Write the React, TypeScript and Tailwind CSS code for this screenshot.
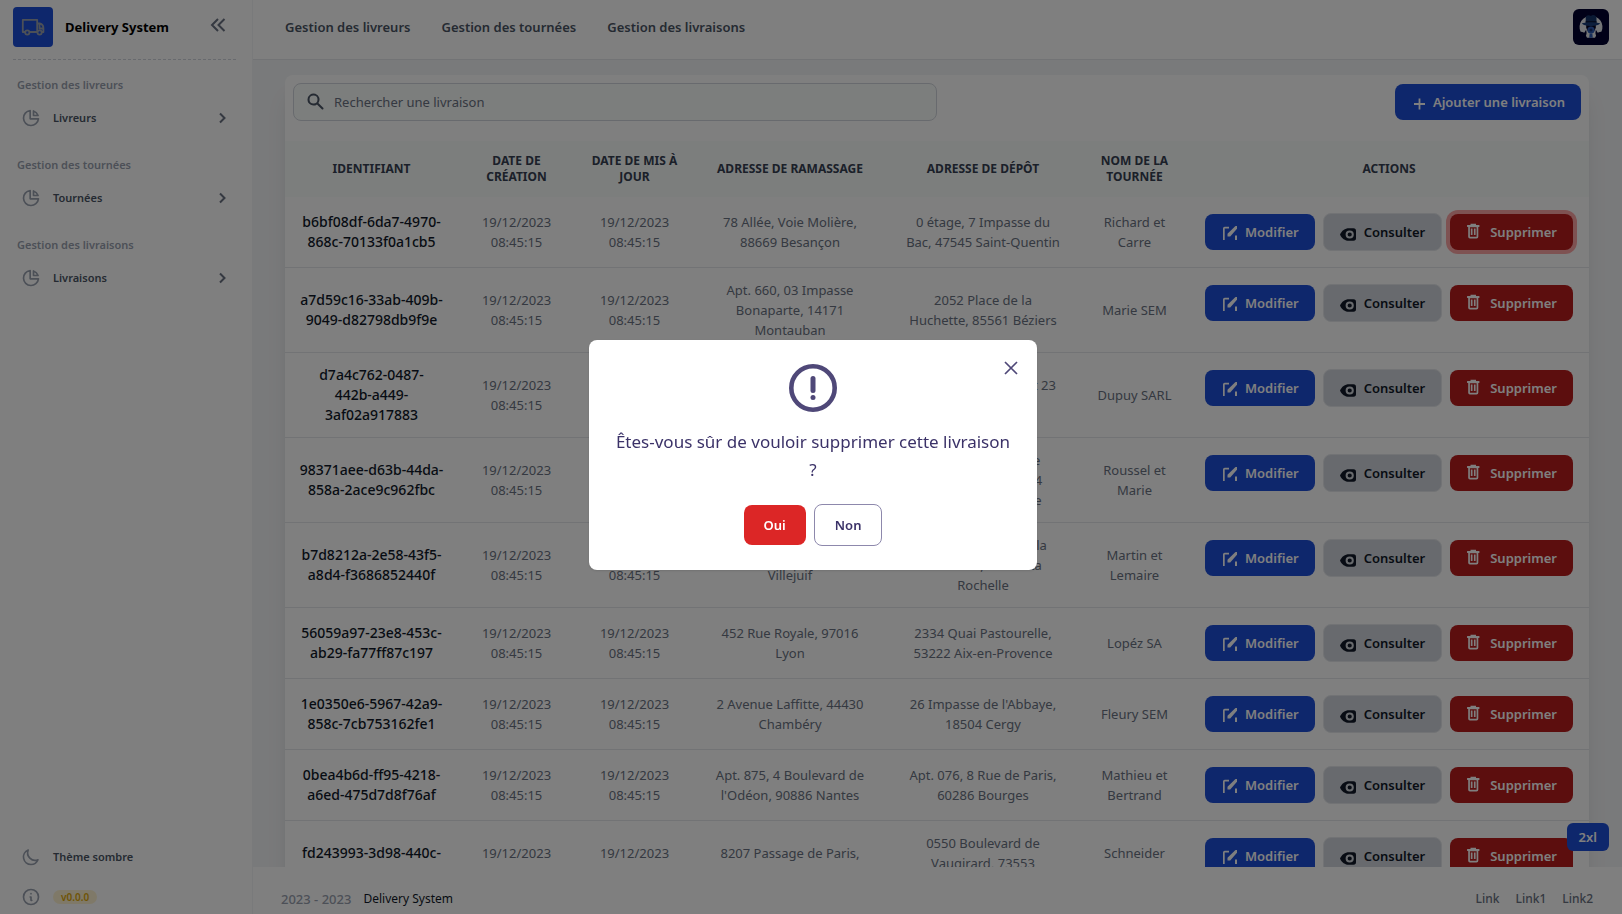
import React from 'react';
import { HiOutlineChartPie, HiOutlineInformationCircle, HiOutlineMoon } from 'react-icons/hi';

type Delivery = { id: string; from: string; to: string; tour: string };

const deliveries: Delivery[] = [
  { id: 'b6bf08df-6da7-4970-\n868c-70133f0a1cb5', from: '78 Allée, Voie Molière,\n88669 Besançon', to: '0 étage, 7 Impasse du\nBac, 47545 Saint-Quentin', tour: 'Richard et\nCarre' },
  { id: 'a7d59c16-33ab-409b-\n9049-d82798db9f9e', from: 'Apt. 660, 03 Impasse\nBonaparte, 14171\nMontauban', to: '2052 Place de la\nHuchette, 85561 Béziers', tour: 'Marie SEM' },
  { id: 'd7a4c762-0487-\n442b-a449-\n3af02a917883', from: '5 Rue de Nesle,\n59140 Dunkerque', to: '3 Avenue du Bac, Lot 23\nNanterre', tour: 'Dupuy SARL' },
  { id: '98371aee-d63b-44da-\n858a-2ace9c962fbc', from: '12 Rue Mouffetard,\n31000 Toulouse', to: '7 étage, 5 Impasse\nMontmartre, 13004\nAix-en-Provence de', tour: 'Roussel et\nMarie' },
  { id: 'b7d8212a-2e58-43f5-\na8d4-f3686852440f', from: '1 Rue Saint-Denis, 94800\nVillejuif', to: '4678 Boulevard de la\nHuchette, 17000 La\nRochelle', tour: 'Martin et\nLemaire' },
  { id: '56059a97-23e8-453c-\nab29-fa77ff87c197', from: '452 Rue Royale, 97016\nLyon', to: '2334 Quai Pastourelle,\n53222 Aix-en-Provence', tour: 'Lopéz SA' },
  { id: '1e0350e6-5967-42a9-\n858c-7cb753162fe1', from: '2 Avenue Laffitte, 44430\nChambéry', to: "26 Impasse de l'Abbaye,\n18504 Cergy", tour: 'Fleury SEM' },
  { id: '0bea4b6d-ff95-4218-\na6ed-475d7d8f76af', from: "Apt. 875, 4 Boulevard de\nl'Odéon, 90886 Nantes", to: 'Apt. 076, 8 Rue de Paris,\n60286 Bourges', tour: 'Mathieu et\nBertrand' },
  { id: 'fd243993-3d98-440c-\n9d1e-52b7c0a8e614', from: '8207 Passage de Paris,\n38211 Grenoble', to: '0550 Boulevard de\nVaugirard, 73553\nAntibes', tour: 'Schneider\nSAS' },
];

const columns = [
  { label: 'Identifiant', width: 'w-[173px]' },
  { label: 'Date de\ncréation', width: 'w-[117px]' },
  { label: 'Date de mis à\njour', width: 'w-[119px]' },
  { label: 'Adresse de ramassage', width: 'w-[192px]' },
  { label: 'Adresse de dépôt', width: 'w-[194px]' },
  { label: 'Nom de la\ntournée', width: 'w-[109px]' },
  { label: 'Actions', width: 'w-[400px]' },
];

const sections = [
  { title: 'Gestion des livreurs', item: 'Livreurs' },
  { title: 'Gestion des tournées', item: 'Tournées' },
  { title: 'Gestion des livraisons', item: 'Livraisons' },
];

const TruckIcon = () => (
  <svg aria-hidden="true" className="size-6" viewBox="0 0 24 24" fill="none" stroke="currentColor" strokeWidth="1.800" strokeLinejoin="round">
    <path d="M4.200 17H1.800V4.800h14.400V17H8.400M16.200 8.500h2.600q3.600.8 3.600 4.800V17h-1.600M18.500 8.700v4.800h3.700" />
    <circle cx="6.300" cy="17.500" r="2.100" />
    <circle cx="18.600" cy="17.500" r="2.100" />
  </svg>
);

const ChevronIcon = () => (
  <svg aria-hidden="true" className="size-3 text-gray-500" viewBox="0 0 12 12" fill="none" stroke="currentColor" strokeWidth="2">
    <path d="M4 1.500 8.500 6 4 10.500" />
  </svg>
);

const EditIcon = () => (
  <svg aria-hidden="true" className="mt-0.5 size-4" viewBox="0 0 16 16" fill="currentColor">
    <path d="M2 15V3.500Q2 1.800 3.700 1.800H8v1.700H3.700V15z" />
    <path d="M6.500 11.500V8.800L14.500 1h1.500v2.800L9.200 11.500z" />
    <path d="M14 10.500h2V15h-2z" />
  </svg>
);

const EyeIcon = () => (
  <svg aria-hidden="true" className="mt-1 size-4" viewBox="0 0 16 16">
    <path fill="currentColor" d="M0 8.500C1.700 4.500 5 2.200 9 2.200h4.500Q16 2.200 16 5v7q0 2.800-2.500 2.800H9C5 14.800 1.700 12.500 0 8.500z" />
    <circle cx="9.700" cy="8.500" r="3.100" fill="currentColor" stroke="#d1d5db" strokeWidth="2" />
  </svg>
);

const TrashIcon = () => (
  <svg aria-hidden="true" className="mb-0.5 size-4" viewBox="0 0 16 16" fill="currentColor" fillRule="evenodd">
    <path d="M4.500.8H10v1.300h3.400v2h-1.100v9.700q0 1.700-1.700 1.700H3.900q-1.700 0-1.700-1.700V4.100H1.100v-2h3.400zM3.900 4.300v9.400h6.700V4.300zM4.800 5.500h1.700v6.600H4.800zM7.900 5.500h1.700v6.600H7.900z" />
  </svg>
);

const Avatar = () => (
  <svg aria-hidden="true" className="size-9" viewBox="0 0 36 36">
    <rect width="36" height="36" fill="#020230" />
    <path d="M18 7a11 11 0 0 1 10.500 15.500L24 25l-2 3.800h-8L12 25l-4.500-2.500A11 11 0 0 1 18 7z" fill="#e8ebef" />
    <path d="M13.200 16h9.600v3l-1.600 3h-6.400l-1.600-3z" fill="#020220" />
    <path d="M7.500 23.200 13 20l.6 4-1 4.800H8zM28.500 23.200 23 20l-.6 4 1 4.800H28z" fill="#020230" />
    <path d="M8 22.500 12.500 17l.8 3.500-2 3.200zM28 22.500 23.500 17l-.8 3.500 2 3.200z" fill="#e8ebef" />
    <path d="M12.700 14V9q0-2.400 2.300-2.700 1.700-.2 3 .6 1.300-1.200 3.500-.6 2 .5 2 2.700v5z" fill="#153468" />
    <path d="M12.700 12.200h10.800v1.600H12.700z" fill="#07112e" />
    <path d="M8.800 14.300q9.200-2 18.400 0-1.800 2.600-9.200 2.600t-9.200-2.600z" fill="#1b3f7a" />
    <circle cx="18" cy="21" r="3.600" fill="#2f5cb5" />
    <circle cx="18" cy="21" r="1.500" fill="#16306e" />
    <path d="M16.700 24.500h2.600l.5 4.300h-3.600z" fill="#2f5cb5" />
  </svg>
);

function Sidebar() {
  return (
    <aside className="flex w-[253px] shrink-0 flex-col border-r border-gray-100 bg-white pt-[7px] pr-4 pl-[13px] text-[11px] font-semibold text-gray-600">
      <div className="flex h-[53px] items-start border-b border-dashed border-gray-300">
        <div className="flex size-10 shrink-0 items-center justify-center rounded bg-[#1d4ed8] text-gray-400">
          <TruckIcon />
        </div>
        <span className="ml-3 flex-1 text-[13px] leading-10 font-bold text-black">Delivery System</span>
        <button type="button" aria-label="Réduire le menu" className="mt-2 mr-2 p-0.5 text-gray-500">
          <svg aria-hidden="true" className="size-4" viewBox="0 0 16 16" fill="none" stroke="currentColor" strokeWidth="2">
            <path d="M8 2 2 8l6 6M14.500 2l-6 6 6 6" />
          </svg>
        </button>
      </div>
      <nav className="flex flex-1 flex-col">
        {sections.map((section) => (
          <div key={section.title} className="h-20 pt-4 pr-2 pl-1">
            <p className="leading-[18px] text-gray-400">{section.title}</p>
            <a href="#" className="mt-3.5 flex h-5 items-center">
              <HiOutlineChartPie aria-hidden="true" className="ml-1 size-5 text-gray-400" />
              <span className="ml-3 flex-1">{section.item}</span>
              <ChevronIcon />
            </a>
          </div>
        ))}
      </nav>
      <div className="pb-[7px] pl-1">
        <button type="button" className="flex h-5 items-center">
          <HiOutlineMoon aria-hidden="true" className="ml-1 size-5 text-gray-400" />
          <span className="ml-3">Thème sombre</span>
        </button>
        <div className="mt-5 flex h-5 items-center">
          <HiOutlineInformationCircle aria-hidden="true" className="ml-1 size-5 text-gray-400" />
          <span className="ml-3 rounded-full bg-[#fef3d0] px-2 text-[10px] leading-[14px] text-[#e0a808]">v0.0.0</span>
        </div>
      </div>
    </aside>
  );
}

function DeliveryRow({ delivery, focused }: { delivery: Delivery; focused: boolean }) {
  return (
    <tr className="border-b border-gray-200">
      <th scope="row" className="py-3 text-sm font-medium text-gray-900">{delivery.id}</th>
      <td className="py-3">{'19/12/2023\n08:45:15'}</td>
      <td className="py-3">{'19/12/2023\n08:45:15'}</td>
      <td className="py-3">{delivery.from}</td>
      <td className="py-3">{delivery.to}</td>
      <td className="py-3">{delivery.tour}</td>
      <td className="p-4 align-top font-semibold">
        <div className="flex items-center justify-center gap-2">
          <button type="button" className="flex h-9 items-center gap-2 rounded-lg bg-[#1d4ed8] px-4 text-white">
            <EditIcon />
            Modifier
          </button>
          <button type="button" className="flex h-[38px] items-center gap-2 rounded-lg border border-gray-200 bg-gray-300 px-4 text-gray-900">
            <EyeIcon />
            Consulter
          </button>
          <button type="button" className={focused ? 'flex h-9 items-center gap-2 rounded-lg bg-[#b91c1c] px-4 text-white ring-4 ring-[#fca5a5]' : 'flex h-9 items-center gap-2 rounded-lg bg-[#b91c1c] px-4 text-white'}>
            <TrashIcon />
            Supprimer
          </button>
        </div>
      </td>
    </tr>
  );
}

function ConfirmDialog() {
  return (
    <div className="fixed inset-0 z-50 flex items-center justify-center bg-black/50 pb-1 pl-1">
      <div role="dialog" aria-modal="true" aria-labelledby="confirm-text" className="relative w-full max-w-md rounded-lg bg-white p-6 text-center text-[#3b3268] shadow-sm">
        <button type="button" aria-label="Fermer" className="absolute top-3 right-2.5 flex size-8 items-center justify-center">
          <svg aria-hidden="true" className="size-3.5" viewBox="0 0 14 14" fill="none" stroke="#4f4878" strokeWidth="1.700">
            <path d="m1 1 12 12M13 1 1 13" />
          </svg>
        </button>
        <svg aria-hidden="true" className="mx-auto size-12" viewBox="0 0 48 48" fill="none" stroke="#4f4878" strokeLinecap="round">
          <circle cx="24" cy="24" r="21.700" strokeWidth="4.600" />
          <path d="M24 14.500v12" strokeWidth="5" />
          <circle cx="24" cy="33.500" r="2.500" fill="#4f4878" stroke="none" />
        </svg>
        <p id="confirm-text" className="mt-4 mb-5 text-[17px] leading-7">
          Êtes-vous sûr de vouloir supprimer cette livraison ?
        </p>
        <div className="flex items-center justify-center gap-2 text-[13px] font-semibold">
          <button type="button" className="h-10 rounded-lg bg-[#dc2626] px-5 text-white">Oui</button>
          <button type="button" className="h-[42px] rounded-lg border border-[#8d88ac] bg-white px-5">Non</button>
        </div>
      </div>
    </div>
  );
}

export default function App() {
  return (
    <div className="flex h-screen overflow-hidden bg-gray-100 font-['Noto_Sans','Open_Sans',sans-serif] text-[13px] leading-5 text-gray-500">
      <Sidebar />
      <div className="flex min-w-0 flex-1 flex-col">
        <header className="flex h-[60px] shrink-0 items-start justify-between border-b border-gray-200 bg-white pt-[9px] pr-[13px] pl-8">
          <nav className="flex gap-[31px] leading-9 font-semibold text-gray-600">
            <a href="#">Gestion des livreurs</a>
            <a href="#">Gestion des tournées</a>
            <a href="#">Gestion des livraisons</a>
          </nav>
          <button type="button" aria-label="Profil" className="overflow-hidden rounded-md">
            <Avatar />
          </button>
        </header>

        <main className="min-h-0 flex-1 overflow-hidden pt-[15px] pr-[33px] pl-8">
          <section className="rounded-lg bg-white shadow-xl">
            <div className="flex items-center justify-between px-2 pt-2 pb-5">
              <label className="flex h-[38px] w-1/2 items-center rounded-lg border border-gray-300 bg-[#f9fcfb] pl-3">
                <svg aria-hidden="true" className="size-5 text-gray-600" viewBox="0 0 20 20" fill="currentColor" fillRule="evenodd">
                  <path d="M7.500 3.500a4 4 0 1 0 0 8 4 4 0 0 0 0-8zM1.500 7.500a6 6 0 1 1 10.890 3.476l4.817 4.817a1 1 0 0 1-1.414 1.414l-4.816-4.816A6 6 0 0 1 1.500 7.500z" />
                </svg>
                <input type="search" aria-label="Rechercher une livraison" placeholder="Rechercher une livraison" className="ml-2 min-w-0 flex-1 bg-transparent placeholder:text-gray-500 focus:outline-none" />
              </label>
              <button type="button" className="flex h-9 items-center gap-1.5 rounded-lg bg-[#1d4ed8] px-4 font-semibold text-white">
                <svg aria-hidden="true" className="mt-1 size-4" viewBox="0 0 16 16" stroke="currentColor" strokeWidth="1.800">
                  <path d="M3 8h11M8.500 2.500v11" />
                </svg>
                Ajouter une livraison
              </button>
            </div>
            <table className="w-full table-fixed border-collapse text-center whitespace-pre-line">
              <thead className="bg-[#f9fcfb] text-xs leading-4 text-gray-700 uppercase">
                <tr>
                  {columns.map((column) => (
                    <th key={column.label} scope="col" className={`h-14 font-bold ${column.width}`}>{column.label}</th>
                  ))}
                </tr>
              </thead>
              <tbody>
                {deliveries.map((delivery, index) => (
                  <DeliveryRow key={delivery.id} delivery={delivery} focused={index === 0} />
                ))}
              </tbody>
            </table>
          </section>
        </main>

        <footer className="flex h-[47px] shrink-0 items-center justify-between bg-white pt-4 pr-[29px] pl-7">
          <p className="flex gap-3 font-medium text-gray-400">
            2023 - 2023
            <a href="#" className="text-xs leading-5 font-normal text-gray-900">Delivery System</a>
          </p>
          <nav className="flex gap-4 text-xs font-medium">
            <a href="#">Link</a>
            <a href="#">Link1</a>
            <a href="#">Link2</a>
          </nav>
        </footer>
      </div>
      <div className="fixed right-[13px] bottom-[63px] rounded-md bg-[#1d4ed8] px-3 py-1 font-semibold text-white">2xl</div>
      <ConfirmDialog />
    </div>
  );
}
